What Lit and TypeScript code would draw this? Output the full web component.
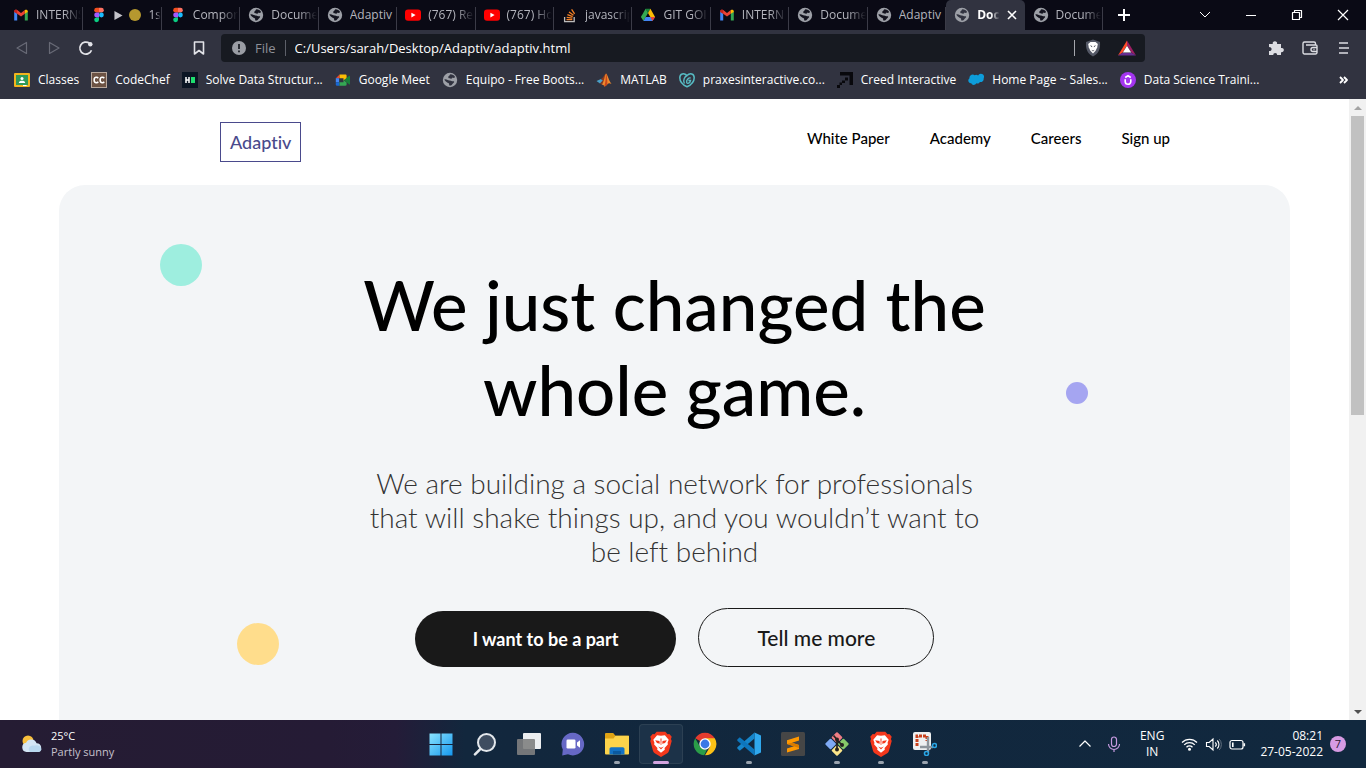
import { LitElement, html, svg, css, nothing, type TemplateResult } from 'lit';
import { customElement } from 'lit/decorators.js';
import { classMap } from 'lit/directives/class-map.js';

const icon = (size: number, box: string, body: unknown) =>
  html`<svg class="icon" width=${size} height=${size} viewBox=${box} aria-hidden="true">${body}</svg>`;

const gmail = () => icon(16, '0 0 16 16', svg`
  <path d="M1.2 13.5V4.2L4.2 6.4v7.1z" fill="#4285f4"/>
  <path d="M11.8 13.5V6.4l3-2.2v9.3z" fill="#34a853"/>
  <path d="M1.2 4.4C1.2 2.6 3 2.3 4.2 3.1L8 6l3.8-2.9v3.6L8 9.6 4.2 6.7z" fill="#ea4335"/>
  <path d="M1.2 4.4C1.2 3 2.6 2.3 4.2 3.1v3.7L1.2 4.9z" fill="#c5221f"/>
  <path d="M14.8 4.4c0-1.4-1.4-2.1-3-1.3v3.7l3-1.9z" fill="#fbbc04"/>`);

const figma = () => icon(16, '0 0 16 16', svg`
  <path d="M8 .8H5.6a2.4 2.4 0 0 0 0 4.8H8z" fill="#f24e1e"/>
  <path d="M8 .8h2.4a2.4 2.4 0 0 1 0 4.8H8z" fill="#ff7262"/>
  <path d="M8 5.6H5.6a2.4 2.4 0 0 0 0 4.8H8z" fill="#a259ff"/>
  <circle cx="10.4" cy="8" r="2.4" fill="#1abcfe"/>
  <path d="M8 10.4H5.6A2.4 2.4 0 1 0 8 12.8z" fill="#0acf83"/>`);

const globe = () => icon(16, '0 0 16 16', svg`
  <circle cx="8" cy="8" r="7.2" fill="#9da0a7"/>
  <path class="hole" d="M8.400 2.200c2 0 3.900 1 4.700 2.800-.7 1-1.700 1.100-2.500.6-.3 1-1.300 1.300-2.100.9-.6-.3-1.400.1-2-.5-.5-.7-.2-1.500.5-1.900.5-.4.6-1.500 1.400-1.900z"/>
  <path class="hole" d="M2.400 7.300c1.300-.3 2.400.1 3.300.7.900.6 2.100.2 3.100.7.900.5 1.700.6 2.900.6.7.2.5 1.100-.1 1.500-.8.500-1.100 1.200-1.700 1.900-.6.800-1.700 1-2.500.8-.5-.5-.1-1.200-.3-1.800-.3-.8-1.400-.7-2.200-1.400-.9-.8-2.400-1.500-2.500-3z"/>`);

const youtube = () => icon(16, '0 0 16 16', svg`
  <rect x="0" y="2.400" width="16" height="11.400" rx="3" fill="#f00"/>
  <path d="M6.400 5.700v4.800l4.200-2.400z" fill="#fff"/>`);

const stack = () => icon(16, '0 0 16 16', svg`
  <path d="M2.600 10v4.700h9.600V10" fill="none" stroke="#bcbbbb" stroke-width="1.300"/>
  <path d="M4.500 12.600h5.800M4.700 10.300l5.700.8M5.400 7.700l5.300 2M7 5l4.500 3.300M9.600 2.300l3 4.500" stroke="#f48024" stroke-width="1.300"/>`);

const drive = () => icon(16, '0 0 16 16', svg`
  <path d="M5.600 1.800h4.800L8 6z" fill="#188038"/>
  <path d="M5.600 1.800 8 6l-4.500 8L.9 10z" fill="#34a853"/>
  <path d="M10.400 1.800 8 6l2.300 4.100h4.800z" fill="#fbbc04"/>
  <path d="M5.700 10.100h9.400l-2.600 3.900h-9z" fill="#4285f4"/>
  <path d="M10.300 10.100h4.800l-2.600 3.900z" fill="#ea4335"/>`);

const classroom = () => icon(16, '0 0 16 16', svg`
  <rect y="1" width="16" height="14" rx="1" fill="#f2b51d"/>
  <rect x="2" y="3" width="12" height="10" fill="#2f9a58"/>
  <circle cx="8" cy="6.600" r="1.500" fill="#fff"/>
  <path d="M4.800 11c0-1.600 1.600-2.200 3.200-2.200s3.200.6 3.200 2.200z" fill="#fff"/>
  <path d="M9 13h3.600v1H9z" fill="#fff"/>`);

const codechef = () => icon(16, '0 0 16 16', svg`
  <rect x=".5" y=".5" width="15" height="15" fill="#6d5344" stroke="#b9a89c"/>
  <path d="M7.200 6.200A2.200 2.200 0 0 0 3.200 7v2a2.200 2.200 0 0 0 4 .8M13.200 6.200a2.200 2.200 0 0 0-4 .8v2a2.200 2.200 0 0 0 4 .8" fill="none" stroke="#fff" stroke-width="1.600"/>`);

const hackerrank = () => icon(16, '0 0 16 16', svg`
  <rect width="16" height="16" fill="#0b1524"/>
  <path d="M4 5v6M7 5v6M4 8h3" stroke="#fff" stroke-width="1.500"/>
  <rect x="9" y="5" width="4" height="6" fill="#1ede6e"/>`);

const meet = () => icon(16, '0 0 16 16', svg`
  <path d="M4.600 2.500v3.700H.8z" fill="#ea4335"/>
  <path d="M.8 6.200h3.300v4H.8z" fill="#4285f4"/>
  <path d="M.8 10.200h3.800v3.500H2a1.200 1.200 0 0 1-1.200-1.200z" fill="#1967d2"/>
  <path d="M4.600 2.500h5.800c.8 0 1.200.5 1.200 1.200v3L8.500 8.600V6.200H4.600z" fill="#fbbc04"/>
  <path d="M4.600 10.200h3.900V8l3.100 2.500v2c0 .8-.5 1.200-1.200 1.200H4.600z" fill="#34a853"/>
  <path d="m9 8.100 5-4.200c.5-.4 1-.2 1 .4v7.600c0 .6-.5.8-1 .4z" fill="#188038"/>`);

const matlab = () => icon(16, '0 0 16 16', svg`
  <path d="M.5 9 5 6.900l2 1.700-3 3z" fill="#4aa0c8"/>
  <path d="M5 6.900c2.200-.6 3-4.200 5-5.400L8 9.500 5.600 12.600 4 11.600l3-3z" fill="#8c3a1e"/>
  <path d="M10 1.500c1.600 1 2.700 7 5.500 10.500-2-1.300-3-.9-4.100.2-1 1-1.800 2-3.200 2.400 0-1.300-1.200-2-2.600-2C8 11 8.500 3.500 10 1.500z" fill="#f08a2c"/>
  <path d="M10 1.500c1 2 1.400 7 1.400 10.700-1 1-1.800 2-3.200 2.400C9.800 10 9.700 5 10 1.500z" fill="#c9471d"/>`);

const godaddy = () => icon(16, '0 0 16 16', svg`
  <path d="M8 14.800C4 13 .8 9.500.8 5.800.8 1.500 5 .5 8 3.500c3-3 7.200-2 7.200 2.300 0 3.700-3.200 7.200-7.200 9z" fill="none" stroke="#57bcc4" stroke-width="1.500"/>
  <path d="M5.400 11.500C3.500 8 6 4.500 8 3.500M11.700 6.100c-1.700-.8-4.700 1.500-4 4.400.6 1.500 3.200 1 3.800-2H9.400" fill="none" stroke="#57bcc4" stroke-width="1.400"/>`);

const creed = () => icon(16, '0 0 16 16', svg`
  <path d="M3 0h13v13h-3.500V3.500H3z" fill="#08080c"/>
  <path d="M8 5.500h3v3H8zM5 8.500h3v2.500H5zM2.500 10.500H5V13H2.500zM0 13h3v3H0z" fill="#08080c"/>`);

const cloud = () => icon(16, '0 0 16 16', svg`
  <path d="M6.600 3.200a3.200 3.200 0 0 1 3.500.4 3 3 0 0 1 5.600 2.500c.3 2.600-1.600 4.200-3.900 3.900-.8 1.700-2.400 1.900-3.500 1.300-1.200 2.200-4.200 2.200-5 0C1.300 11.500.3 10 .3 8.600c0-1 .5-1.900 1.200-2.400C.9 3.400 4.600 1.100 6.600 3.200z" fill="#0d9ddb"/>`);

const udemy = () => icon(16, '0 0 16 16', svg`
  <circle cx="8" cy="8" r="8" fill="#a435f0"/>
  <path d="M5.200 7.200v2.400c0 3.600 5.600 3.600 5.600 0V7.200M5.200 5.500 8 3.800l2.800 1.700" fill="none" stroke="#fff" stroke-width="1.600"/>`);

const brave = (size: number) => icon(size, '0 0 24 24', svg`
  <path d="M8 .8h8l2 2.300 1.700-.3 2.200 2.500-.7 2 .7 2-2.500 9c-.3 1-.8 1.700-1.600 2.200L12 24l-5.800-3.500c-.8-.5-1.300-1.200-1.600-2.200l-2.500-9 .7-2-.7-2 2.200-2.500 1.700.3z" fill="#f4381c"/>
  <path d="M12 4.300 15.600 4l3.500 4-1 2.700.2 1.800-3 3.300.2 1.400L12 20l-3.500-2.800.2-1.400-3-3.300.2-1.800-1-2.700 3.500-4z" fill="#fff"/>
  <path d="m6.600 8.500 4 .8.300 2.400-2.600-.7zM17.400 8.500l-4 .8-.3 2.400 2.600-.7zM9.400 14.400l2.600 1 2.600-1L12 17zM11.500 7h1l-.2 6h-.6z" fill="#f4381c"/>`);

const shield = () => icon(18, '0 0 18 18', svg`
  <path d="M9 .6 16 3c.5 7-1.300 11.500-7 14.500C3.300 14.500 1.500 10 2 3z" fill="#545866"/>
  <path d="M6.500 3h5l2.300 2-.6 3.500-1.600 3.200L9 14.600l-2.600-2.900-1.600-3.200L4.200 5z" fill="#fff"/>
  <path d="m5.700 6.300 2.400.6v1.300zM12.300 6.300l-2.400.6v1.300zM7.300 10.800 9 11.400l1.700-.6L9 12.500z" fill="#3a3d49"/>`);

const bat = () => icon(18, '0 0 18 18', svg`
  <path d="M9 1.500 0 16.500l4.500-2.700L9 6.500z" fill="#ff4b26"/>
  <path d="m9 1.500 9 15-4.500-2.700L9 6.500z" fill="#9e1f63"/>
  <path d="M0 16.500h18l-4.500-2.700h-9z" fill="#662d91"/>
  <path d="m9 6.800 4.200 6.700H4.800z" fill="#fff"/>`);

const chrome = () => icon(24, '0 0 24 24', svg`
  <path d="M12 12 2.200 6.300A11.300 11.300 0 0 1 21.800 6.300z" fill="#e33b2e"/>
  <path d="M12 6.300h9.800A11.300 11.300 0 0 1 12 23.300l5-8.500z" fill="#fbc116"/>
  <path d="M2.200 6.300 7 14.800l5 3 2-.4-2.800 5.900A11.300 11.300 0 0 1 2.200 6.300z" fill="#2a9d48"/>
  <circle cx="12" cy="12" r="5.700" fill="#fff"/><circle cx="12" cy="12" r="4.400" fill="#3b78e7"/>`);

const windows = () => icon(24, '0 0 24 24', svg`
  <defs><linearGradient id="w" x1="0" y1="0" x2="1" y2="1"><stop stop-color="#8be4ff"/><stop offset="1" stop-color="#1597ee"/></linearGradient></defs>
  <path d="M.5 1.500h11v10.500H.5zM12.500 1.500h11v10.500h-11zM.5 13h11v10.500H.5zM12.500 13h11v10.500h-11z" fill="url(#w)"/>`);

const searchGlass = () => icon(24, '0 0 24 24', svg`
  <circle cx="13.500" cy="10.500" r="8.500" fill="#3e4d60" stroke="#e4e8ec" stroke-width="2"/>
  <path d="m7 17.300-5 5" stroke="#e4e8ec" stroke-width="2.600" stroke-linecap="round"/>`);

const taskView = () => icon(24, '0 0 24 24', svg`
  <rect x="6" y="1" width="18" height="16" rx="1" fill="#eceef0"/>
  <rect x="0" y="7" width="18" height="16" rx="1" fill="#7f7f80" opacity=".9"/>`);

const chat = () => icon(24, '0 0 24 24', svg`
  <path d="M12 .8A11.300 11.300 0 1 1 7 22.300L1.200 23.500l.6-6A11.300 11.300 0 0 1 12 .8z" fill="#6668c5"/>
  <rect x="5.500" y="7.500" width="9" height="9" rx="1.300" fill="#fff"/>
  <path d="m16 10.500 3-2.300v7.600l-3-2.300z" fill="#fff"/>`);

const folder = () => icon(24, '0 0 24 24', svg`
  <path d="M0 2.200C0 1.500.5 1 1.200 1h7l2.300 2.700H24V9H0z" fill="#dfa314"/>
  <path d="M0 6.500h8.500l2-2.700H23c.6 0 1 .4 1 1v16.700c0 .6-.4 1-1 1H1a1 1 0 0 1-1-1z" fill="#fdd44b"/>
  <path d="M4.500 22.500V17c0-1 .7-1.700 1.700-1.700h11.600c1 0 1.700.7 1.700 1.700v5.500z" fill="#1372c4"/>
  <path d="M8 19h8v3.500H8z" fill="#0b5a9f"/>`);

const vscode = () => icon(24, '0 0 24 24', svg`
  <path d="M17.500.5 24 3.500v17l-6.500 3z" fill="#2fa8ee"/>
  <path d="M17.500.5v6L2.800 18.800.3 16.500v-1.200z" fill="#1686cb"/>
  <path d="M17.500 23.500v-6L2.800 5.200.3 7.500v1.200z" fill="#0d76bd"/>`);

const sublime = () => icon(24, '0 0 24 24', svg`
  <rect width="24" height="24" rx="1.500" fill="#464646"/>
  <path d="M18 4.500v4l-7 2.300 7 2.300v4L6 20.500v-4l7-2.200L6 12V8.300z" fill="#ff9800"/>
  <path d="m6 12 12 4v-3L11 10.800z" fill="#d97b00"/>`);

const git = () => icon(24, '0 0 24 24', svg`
  <rect x="8" y="1.500" width="8" height="8" rx="1" transform="rotate(45 12 5.500)" fill="#ef7d84"/>
  <rect x="1.600" y="8" width="8" height="8" rx="1" transform="rotate(45 5.600 12)" fill="#7faaf5"/>
  <rect x="14.400" y="8" width="8" height="8" rx="1" transform="rotate(45 18.400 12)" fill="#85c96a"/>
  <rect x="8" y="14.500" width="8" height="8" rx="1" transform="rotate(45 12 18.500)" fill="#fbe58a"/>
  <path d="M8.500 3.500 12 7.500v10M12 8l5 5" stroke="#25221f" stroke-width="1.700" fill="none"/>
  <circle cx="12" cy="7.500" r="2" fill="#25221f"/><circle cx="12" cy="17.500" r="2" fill="#25221f"/><circle cx="17" cy="13" r="2" fill="#25221f"/>`);

const snip = () => icon(24, '0 0 24 24', svg`
  <rect x="0" y="0" width="18" height="18" rx="2" fill="#eef0f1"/>
  <path d="M4 14V4h10v5" fill="none" stroke="#c8401c" stroke-width="3" stroke-dasharray="3 1"/>
  <path d="M15 5v15M7 15h13" stroke="#8d959c" stroke-width="2.400"/>
  <circle cx="13.500" cy="21.500" r="2" fill="none" stroke="#29a5e5" stroke-width="1.600"/>
  <circle cx="21.500" cy="13.500" r="2" fill="none" stroke="#29a5e5" stroke-width="1.600"/>`);

const line = (size: number, d: string, width = 1) =>
  icon(size, `0 0 ${size} ${size}`, svg`<path d=${d} fill="none" stroke="currentColor" stroke-width=${width} stroke-linejoin="round"/>`);

interface Tab { icon: () => TemplateResult; label: string; active?: boolean; playing?: boolean; }

const TABS: Tab[] = [
  { icon: gmail, label: 'INTERNS' },
  { icon: figma, label: '1s', playing: true },
  { icon: figma, label: 'Compor' },
  { icon: globe, label: 'Docume' },
  { icon: globe, label: 'Adaptiv' },
  { icon: youtube, label: '(767) Re' },
  { icon: youtube, label: '(767) Ho' },
  { icon: stack, label: 'javascrip' },
  { icon: drive, label: 'GIT GOI' },
  { icon: gmail, label: 'INTERN' },
  { icon: globe, label: 'Docume' },
  { icon: globe, label: 'Adaptiv' },
  { icon: globe, label: 'Doc', active: true },
  { icon: globe, label: 'Docume' },
];

const BOOKMARKS: { icon: () => TemplateResult; label: string }[] = [
  { icon: classroom, label: 'Classes' },
  { icon: codechef, label: 'CodeChef' },
  { icon: hackerrank, label: 'Solve Data Structur...' },
  { icon: meet, label: 'Google Meet' },
  { icon: globe, label: 'Equipo - Free Boots...' },
  { icon: matlab, label: 'MATLAB' },
  { icon: godaddy, label: 'praxesinteractive.co...' },
  { icon: creed, label: 'Creed Interactive' },
  { icon: cloud, label: 'Home Page ~ Sales...' },
  { icon: udemy, label: 'Data Science Traini...' },
];

const APPS: { name: string; icon: () => TemplateResult; state?: 'open' | 'focused' }[] = [
  { name: 'Start', icon: windows },
  { name: 'Search', icon: searchGlass },
  { name: 'Task view', icon: taskView },
  { name: 'Chat', icon: chat },
  { name: 'File Explorer', icon: folder, state: 'open' },
  { name: 'Brave', icon: () => brave(26), state: 'focused' },
  { name: 'Chrome', icon: chrome },
  { name: 'Visual Studio Code', icon: vscode, state: 'open' },
  { name: 'Sublime Text', icon: sublime },
  { name: 'Git', icon: git, state: 'open' },
  { name: 'Brave Beta', icon: () => brave(26), state: 'open' },
  { name: 'Snipping Tool', icon: snip, state: 'open' },
];

const base = css`
  :host, * { box-sizing: border-box; }
  button { font: inherit; color: inherit; background: none; border: 0; padding: 0; margin: 0; cursor: pointer; }
  a { color: inherit; text-decoration: none; }
  .icon { display: block; flex: none; }
`;

@customElement('browser-chrome')
export class BrowserChrome extends LitElement {
  static styles = [base, css`
    :host { display: block; background: #313340; color: #fff; font: 12px/16px "Open Sans", "Noto Sans", sans-serif; }
    .strip { display: flex; height: 30px; padding-left: 5px; background: #0a0a15; }
    .tabs { flex: 0 1 1098px; min-width: 0; display: grid; grid-auto-flow: column; grid-auto-columns: minmax(0, 1fr); }
    .tab { min-width: 0; display: flex; align-items: center; gap: 7px; padding: 0 1px 0 8px; position: relative; color: #b4b5bd; text-align: left; }
    .tab::after { content: ""; position: absolute; right: 0; top: 7px; bottom: 0; width: 1px; background: #3b3b47; }
    .tab.active { padding-right: 8px; background: #313340; color: #fff; font-weight: 700; border-radius: 5px 5px 0 0; }
    .tab.active::after { display: none; }
    .hole { fill: #14141f; }
    .active .hole, .bookmarks .hole { fill: #313340; }
    .label { flex: 1; min-width: 0; overflow: hidden; white-space: nowrap; }
    .label.fade { -webkit-mask-image: linear-gradient(90deg, #000 60%, transparent 98%); mask-image: linear-gradient(90deg, #000 60%, transparent 98%); }
    .marks { display: flex; align-items: center; gap: 6px; }
    .new { width: 42px; display: grid; place-items: center; }
    .window { display: flex; margin-left: auto; }
    .window button { width: 46px; display: grid; place-items: center; }
    .bar { display: flex; align-items: center; height: 36px; }
    .side { width: 221px; display: flex; align-items: center; }
    .side button { width: 32px; display: grid; place-items: center; }
    .side.left { padding-left: 6px; color: #e2e3e8; }
    .side.left .mark { margin-left: auto; margin-right: 6px; }
    .side.left .dim { color: #686a76; }
    .side.right { justify-content: flex-end; padding-right: 5px; color: #dcdde2; }
    .side.right button { width: 34px; }
    .address { flex: 1; display: flex; align-items: center; gap: 9px; height: 28px; padding: 0 9px 0 11px; background: #171a21; border-radius: 4px; font-size: 13px; }
    .address label { color: #8d9098; }
    .rule { width: 1px; height: 16px; background: #5d6069; }
    .rule.light { background: #a5a7ad; }
    .address input { flex: 1; min-width: 0; border: 0; padding: 0; background: none; color: #fff; font: inherit; outline: 0; }
    .address .shield { margin-right: 7px; }
    .bookmarks { display: flex; align-items: center; gap: 12px; height: 33px; padding: 0 14px 5px; }
    .bookmark { display: flex; align-items: center; gap: 8px; white-space: nowrap; }
    .more { margin-left: auto; }
  `];

  private tab(t: Tab) {
    return html`<button class=${classMap({ tab: true, active: !!t.active })} role="tab" aria-selected=${t.active ? 'true' : 'false'}>
      ${t.icon()}
      ${t.playing ? html`<span class="marks">
        ${icon(9, '0 0 9 10', svg`<path d="M0 0v10l9-5z" fill="#c4c4ca"/>`)}
        ${icon(12, '0 0 12 12', svg`<circle cx="6" cy="6" r="6" fill="#b5982f"/>`)}</span>` : nothing}
      <span class=${classMap({ label: true, fade: t.label !== 'Adaptiv' })}>${t.label}</span>
      ${t.active ? line(10, 'M1 1l8 8M9 1 1 9', 1.6) : nothing}
    </button>`;
  }

  render() {
    return html`
      <div class="strip">
        <div class="tabs" role="tablist">${TABS.map((t) => this.tab(t))}</div>
        <button class="new" aria-label="New tab">${line(12, 'M6 0v12M0 6h12', 2)}</button>
        <div class="window">
          <button aria-label="Search tabs">${line(12, 'M1 3l5 5 5-5')}</button>
          <button aria-label="Minimize">${line(10, 'M0 5.500h10')}</button>
          <button aria-label="Restore">${line(12, 'M1.500 3.500h7v7h-7zM3.500 3.500v-2h7v7h-2', 1.2)}</button>
          <button aria-label="Close">${line(12, 'M1 1l10 10M11 1 1 11', 1.2)}</button>
        </div>
      </div>
      <div class="bar">
        <div class="side left">
          <button class="dim" aria-label="Back">${line(14, 'M11.500 1.500v11L2 7z', 1.2)}</button>
          <button class="dim" aria-label="Forward">${line(14, 'M2.500 1.500v11L12 7z', 1.2)}</button>
          <button aria-label="Reload">${icon(16, '0 0 16 16', svg`
            <path d="M13.500 10.200A6 6 0 1 1 11.500 3.300" fill="none" stroke="currentColor" stroke-width="1.700"/><circle cx="12.300" cy="4.300" r="2.200" fill="currentColor"/>`)}</button>
          <button class="mark" aria-label="Bookmark">${line(14, 'M2.500 1h9v12L7 9.500 2.500 13z', 1.6)}</button>
        </div>
        <div class="address">
          ${icon(14, '0 0 14 14', svg`<circle cx="7" cy="7" r="7" fill="#9a9da4"/><path d="M7 3v5M7 9.500v1.700" stroke="#171a21" stroke-width="1.700"/>`)}
          <label for="url">File</label><span class="rule"></span>
          <input id="url" type="text" value="C:/Users/sarah/Desktop/Adaptiv/adaptiv.html" />
          <span class="rule light"></span>
          <button class="shield" aria-label="Shields">${shield()}</button>
          <button aria-label="Rewards">${bat()}</button>
        </div>
        <div class="side right">
          <button aria-label="Extensions">${icon(16, '0 0 16 16', svg`
            <path d="M1 4h3.800a2.200 2.200 0 1 1 4.200 0H13v4a2.200 2.200 0 1 1 0 4.200V15H9.200a2 2 0 1 0-4 0H1v-4a2 2 0 1 0 0-3.800z" fill="currentColor"/>`)}</button>
          <button aria-label="Wallet">${line(16, 'M13.500 5V3.500a1.500 1.500 0 0 0-1.500-1.500H2.500a1.500 1.500 0 0 0-1.500 1.500v9A1.500 1.500 0 0 0 2.500 14h11a1.500 1.500 0 0 0 1.500-1.500V6A1 1 0 0 0 14 5H4M15 7.500h-4a2 2 0 0 0 0 4h4M11.500 9.500h1', 1.4)}</button>
          <button aria-label="Menu">${line(12, 'M1 1h9M1 6h10M1 11h9', 1.7)}</button>
        </div>
      </div>
      <nav class="bookmarks" aria-label="Bookmarks">
        ${BOOKMARKS.map((b) => html`<a class="bookmark" href="#">${b.icon()}<span>${b.label}</span></a>`)}
        <button class="more" aria-label="More bookmarks">${line(18, 'M6 6l3 3-3 3M10 6l3 3-3 3', 1.8)}</button>
      </nav>`;
  }
}

@customElement('adaptiv-page')
export class AdaptivPage extends LitElement {
  static styles = [base, css`
    :host { display: flex; min-height: 0; overflow: hidden; background: #fff; color: #000; font: 16px/20px Lato, "Open Sans", sans-serif; font-variant-ligatures: none; }
    .page { flex: 1; min-width: 0; display: flex; flex-direction: column; }
    header { flex: none; display: flex; justify-content: space-between; padding: 23px 179px 23px 220px; }
    .logo { padding: 9px; height: 40px; border: 1px solid #4a4a8c; color: #4a4a8c; font-size: 18px; font-weight: 500; }
    .links { display: flex; gap: 40px; padding-top: 6px; font-size: 15px; font-weight: 500; }
    .hero { flex: 1 0 auto; position: relative; margin: 0 59px; padding: 77px 20px 53px; background: #f3f5f7; border-radius: 26px 26px 0 0; text-align: center; }
    h1 { max-width: 680px; margin: 0 auto; font-size: 69px; line-height: 85px; font-weight: 500; }
    p { max-width: 640px; margin: 34px auto 40px; color: #333; font-size: 28px; line-height: 34px; font-weight: 300; }
    .actions { display: flex; justify-content: center; align-items: flex-end; gap: 22px; }
    .actions button { border-radius: 30px; padding: 0 58px; }
    .primary { height: 56px; background: #191919; color: #fff; font-size: 18px; font-weight: 700; }
    .secondary { height: 59px; color: #191919; font-size: 21px; font-weight: 500; }
    .actions .secondary { border: 1px solid #191919; }
    .dot { position: absolute; width: 42px; height: 42px; border-radius: 50%; }
    .mint { left: 101px; top: 59px; background: #9eeedf; }
    .amber { left: 178px; top: 438px; background: #ffdd8c; }
    .violet { right: 202px; top: 197px; width: 22px; height: 22px; background: #a5a5f1; }
    .scroll { flex: none; width: 17px; display: flex; flex-direction: column; align-items: center; background: #f1f1f1; }
    .arrow { height: 17px; display: grid; place-items: center; color: #505050; }
    .arrow.off { color: #a3a3a3; }
    .track { flex: 1; width: 13px; }
    .thumb { height: 51%; background: #c1c1c1; }
  `];

  render() {
    return html`
      <div class="page">
        <header>
          <a class="logo" href="#">Adaptiv</a>
          <nav class="links">
            <a href="#">White Paper</a><a href="#">Academy</a><a href="#">Careers</a><a href="#">Sign up</a>
          </nav>
        </header>
        <section class="hero">
          <span class="dot mint"></span><span class="dot violet"></span><span class="dot amber"></span>
          <h1>We just changed the<br />whole game.</h1>
          <p>We are building a social network for professionals<br />that will shake things up, and you wouldn’t want to<br />be left behind</p>
          <div class="actions">
            <button class="primary">I want to be a part</button>
            <button class="secondary">Tell me more</button>
          </div>
        </section>
      </div>
      <div class="scroll">
        <span class="arrow off">${icon(8, '0 0 8 8', svg`<path d="M0 6h8L4 2z" fill="currentColor"/>`)}</span>
        <div class="track"><div class="thumb"></div></div>
        <span class="arrow">${icon(8, '0 0 8 8', svg`<path d="M0 2h8L4 6z" fill="currentColor"/>`)}</span>
      </div>`;
  }
}

@customElement('task-bar')
export class TaskBar extends LitElement {
  static styles = [base, css`
    :host { display: grid; grid-template-columns: 1fr auto 1fr; height: 48px; color: #fff; font: 12px/16px "Open Sans", "Noto Sans", sans-serif;
      background: linear-gradient(90deg, #251c33 0, #251b35 24%, #241c38 29%, #12273d 34%, #11283e 100%); }
    .weather { justify-self: start; display: flex; align-items: center; gap: 8px; padding-left: 21px; text-align: left; font-size: 11px; }
    .weather div { display: flex; flex-direction: column; }
    .muted { color: #c5c1cc; }
    .apps { display: flex; align-items: center; }
    .app { position: relative; width: 44px; height: 40px; display: grid; place-items: center; border-radius: 4px; }
    .app.focused { background: #1c3248; box-shadow: inset 0 0 0 1px #2c4053; }
    .app.open::after, .app.focused::after { content: ""; position: absolute; left: 50%; bottom: 0; width: 6px; height: 3px; margin-left: -3px; border-radius: 2px; background: #9aa3ae; }
    .app.focused::after { width: 16px; margin-left: -8px; background: #d3a4e0; }
    .tray { justify-self: end; display: flex; align-items: center; padding-right: 20px; }
    .cell { display: grid; place-items: center; }
    .mic { margin-left: 14px; color: #c79be0; }
    .lang { margin: 0 17px 0 18px; text-align: center; }
    .status { display: flex; align-items: center; gap: 7px; }
    .clock { margin: 0 7px 0 14px; text-align: right; }
    .badge { width: 16px; height: 16px; border-radius: 50%; background: #d79be3; color: #2b1733; text-align: center; font-size: 11px; }
  `];

  render() {
    return html`
      <button class="weather">
        ${icon(22, '0 0 22 22', svg`
          <circle cx="7" cy="8" r="5.500" fill="#f8bf3c"/>
          <path d="M5.500 19a4.700 4.700 0 0 1-.4-9.300 5.700 5.700 0 0 1 10.500.5A4.500 4.500 0 0 1 17 19z" fill="#d4e6f5"/>
          <path d="M9 19c-3-3 0-7.500 4-6.300 3-1.500 7 .3 7.500 3.500-.5 2-2 2.800-3.500 2.800z" fill="#b9d8ef"/>`)}
        <div><span>25°C</span><span class="muted">Partly sunny</span></div>
      </button>
      <div class="apps">
        ${APPS.map((a) => html`<button aria-label=${a.name} class=${classMap({ app: true, open: a.state === 'open', focused: a.state === 'focused' })}>${a.icon()}</button>`)}
      </div>
      <div class="tray">
        <button class="cell" aria-label="Hidden icons">${line(14, 'M1.500 9.500 7 4l5.500 5.500', 1.2)}</button>
        <button class="cell mic" aria-label="Microphone">${line(16, 'M5.500 3.500a2.500 2.500 0 0 1 5 0V8a2.500 2.500 0 0 1-5 0zM2.500 8a5.500 5.500 0 0 0 11 0M8 13.500V16', 1.2)}</button>
        <button class="lang">ENG<br />IN</button>
        <button class="status" aria-label="Network, volume and battery">
          ${icon(17, '0 0 17 17', svg`<path d="M1 6.500a10.500 10.500 0 0 1 15 0M3.200 8.900a7.500 7.500 0 0 1 10.600 0M5.500 11.200a4.300 4.300 0 0 1 6 0" fill="none" stroke="#fff" stroke-width="1.300"/><circle cx="8.500" cy="13.300" r="1.500" fill="#fff"/>`)}
          ${icon(17, '0 0 17 17', svg`<path d="M1.500 6.500h2.700L8 3v11l-3.800-3.500H1.500zM10.300 6.300a3.200 3.200 0 0 1 0 4.400M12.300 4.500a5.700 5.700 0 0 1 0 8" fill="none" stroke="#fff" stroke-width="1.100"/><path d="M14.200 3a8 8 0 0 1 0 11" fill="none" stroke="#62707f"/>`)}
          ${icon(17, '0 0 17 17', svg`<rect x="1" y="4.500" width="13" height="8.500" rx="2" fill="none" stroke="#fff" stroke-width="1.200"/><path d="M3 6.500h1.600v4.500H3zM14.500 7.200h1.600v3h-1.600z" fill="#fff"/>`)}
        </button>
        <button class="clock">08:21<br />27-05-2022</button>
        <span class="badge">7</span>
      </div>`;
  }
}

@customElement('app-root')
export class AppRoot extends LitElement {
  static styles = css`
    :host { display: flex; flex-direction: column; height: 100vh; overflow: hidden; }
    browser-chrome, task-bar { flex: none; }
    adaptiv-page { flex: 1; }
  `;

  render() {
    return html`<browser-chrome></browser-chrome><adaptiv-page></adaptiv-page><task-bar></task-bar>`;
  }
}
